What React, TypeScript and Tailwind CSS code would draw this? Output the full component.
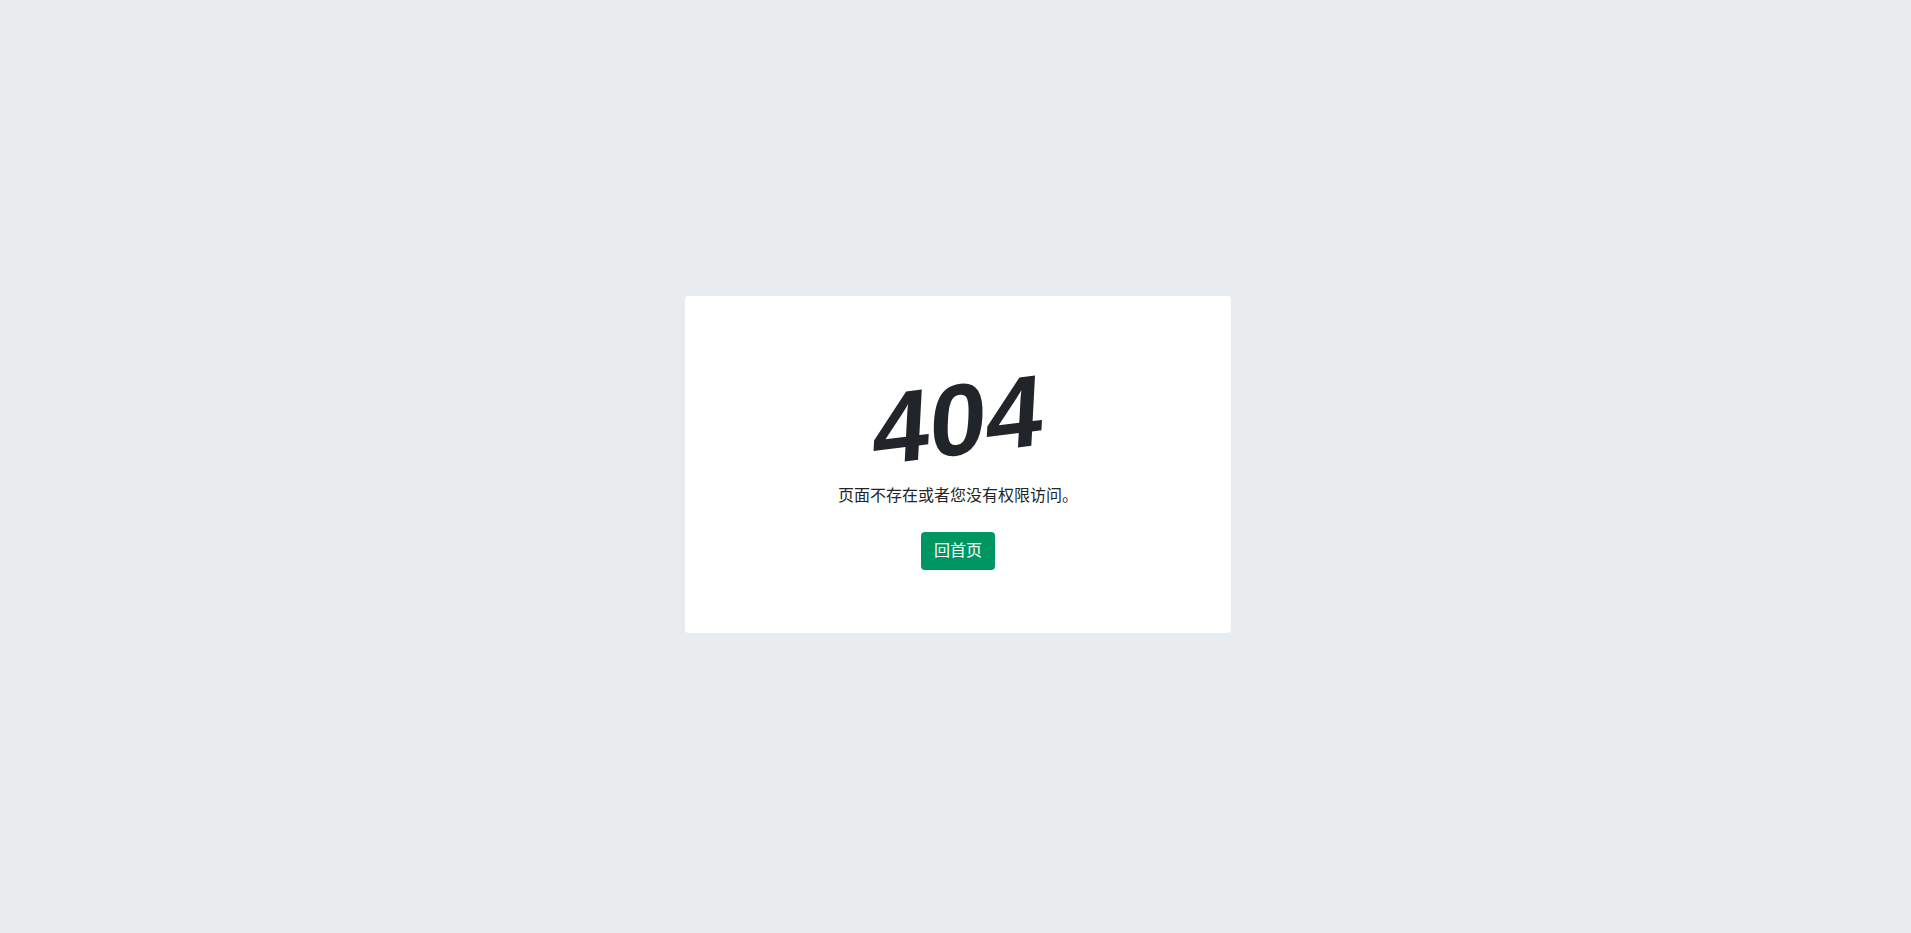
const App = () => {
  return (
    <div
      className="flex min-h-[933px] w-full items-center justify-center bg-[#e9ecef] pb-[4px] pl-[5px]"
      style={{ fontFamily: '"Liberation Sans", "Noto Sans CJK SC", sans-serif' }}
    >
      <div className="flex w-[546px] flex-col items-center rounded bg-white px-16 pt-16 pb-[63px]">
        <h1
          className="h-[120px] text-[102px] font-bold leading-[120px] text-[#212529]"
          style={{ transform: "skew(-3deg, -7deg)" }}
        >
          404
        </h1>
        <p className="mt-[4px] text-base leading-6 text-[#212529]">
          页面不存在或者您没有权限访问。
        </p>
        <button className="mt-6 h-[38px] w-[74px] rounded bg-[#009661] text-base leading-6 text-white">
          回首页
        </button>
      </div>
    </div>
  );
};

export default App;
